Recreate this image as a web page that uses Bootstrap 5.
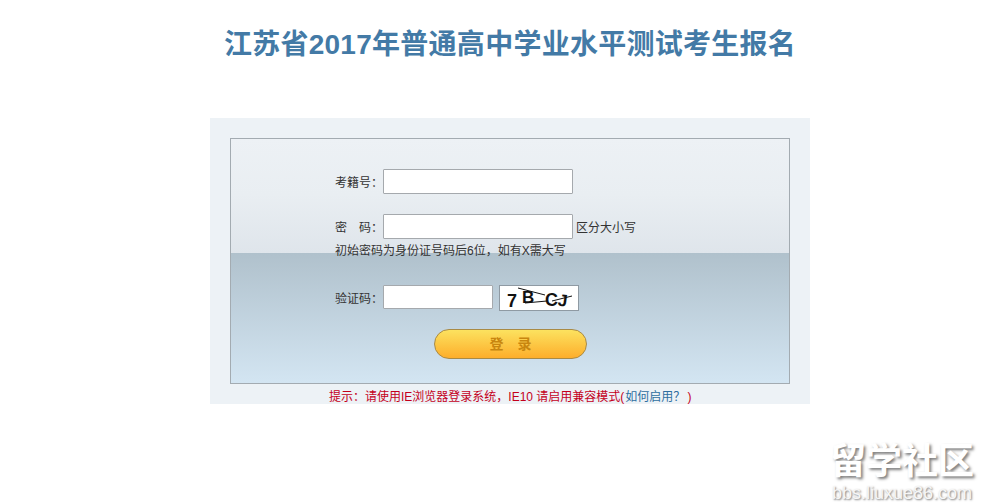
<!DOCTYPE html>
<html lang="zh-CN">
<head>
    <meta charset="UTF-8">
    <meta name="viewport" content="width=device-width, initial-scale=1.0">
    <title>江苏省2017年普通高中学业水平测试考生报名</title>
    <link href="https://cdn.jsdelivr.net/npm/bootstrap@5.3.0/dist/css/bootstrap.min.css" rel="stylesheet">
    <style>
        body {
            font-family: "Liberation Sans", "Noto Sans CJK SC", sans-serif;
            font-size: 12px;
            color: #333;
            background: #fff;
            overflow: hidden;
        }
        .page-wrap {
            position: relative;
            width: 986px;
            height: 504px;
        }
        .page-title {
            font-family: "Liberation Sans", "Noto Sans CJK SC", sans-serif;
            font-size: 28px;
            font-weight: 700;
            line-height: 40px;
            color: #437aa6;
            text-align: center;
            margin: 0;
            padding: 25px 0 53px 34px;
            letter-spacing: 0.27px;
        }
        .login-outer {
            width: 600px;
            height: 286px;
            margin-left: 210px;
            padding: 20px 20px 0;
            background: #edf2f6;
        }
        .login-box {
            height: 246px;
            padding: 30px 0 0 104px;
            border: 1px solid #a3abb1;
            background: linear-gradient(to bottom, #edf1f5 0, #e9eef2 55px, #dfe5eb 114px, #b0c1cc 114px, #d3e5f2 100%);
        }
        .field-row {
            height: 25px;
            line-height: 28px;
        }
        .field-row.next-field {
            margin-top: 20px;
        }
        .field-row.captcha-row {
            margin-top: 26px;
        }
        .field-label {
            width: 48px;
            flex: none;
            white-space: nowrap;
        }
        .field-input {
            width: 190px;
            height: 25px;
            padding: 0 4px;
            font-size: 12px;
            border: 1px solid #a5a9ad;
            border-radius: 1px;
            background: #fff;
        }
        .field-input.short {
            width: 110px;
            height: 24px;
        }
        .field-note {
            margin-left: 3px;
        }
        .hint-line {
            height: 16px;
            line-height: 16px;
            margin-top: 4px;
            white-space: nowrap;
        }
        .captcha-pic {
            display: block;
            flex: none;
            width: 80px;
            height: 26px;
            margin-left: 6px;
            background: #fff;
            border: 1px solid #8f9aa3;
        }
        .captcha-pic text {
            font-family: "Liberation Sans", sans-serif;
            font-weight: 700;
            fill: #111;
        }
        .login-btn {
            display: block;
            width: 153px;
            height: 30px;
            margin: 19px 0 0 99px;
            padding: 0;
            font-size: 14px;
            line-height: 28px;
            font-weight: 700;
            color: #c8860f;
            border: 1px solid #a98a45;
            border-radius: 15px;
            background: linear-gradient(to bottom, #fce25f, #fdae2b);
        }
        .login-btn:hover {
            color: #c8860f;
            border-color: #a98a45;
            background: linear-gradient(to bottom, #fce25f, #fdae2b);
        }
        .tip-line {
            margin-left: 99px;
            height: 20px;
            line-height: 26px;
            color: #c4001c;
            white-space: nowrap;
        }
        .tip-line a {
            margin: 0 2px 0 1px;
            color: #2f6f9f;
            text-decoration: none;
        }
        .site-stamp {
            position: absolute;
            left: 823px;
            top: 442px;
            width: 158px;
            text-align: center;
            color: #fff;
            text-shadow: 2px 2px 3px #7d7d7d;
        }
        .stamp-name {
            font-size: 36px;
            font-weight: 700;
            line-height: 40px;
            white-space: nowrap;
        }
        .stamp-url {
            font-size: 18px;
            line-height: 22px;
            color: #f6f6f6;
            text-shadow: 1px 1px 2px #777;
            white-space: nowrap;
        }
    </style>
</head>
<body>
    <div class="page-wrap">
        <h1 class="page-title">江苏省2017年普通高中学业水平测试考生报名</h1>

        <div class="login-outer">
            <form class="login-box" onsubmit="return false">
                <div class="d-flex field-row">
                    <label class="field-label" for="examNo">考籍号：</label>
                    <input id="examNo" class="field-input" type="text">
                </div>
                <div class="d-flex field-row next-field">
                    <label class="field-label" for="examPwd">密　码：</label>
                    <input id="examPwd" class="field-input" type="password">
                    <span class="field-note">区分大小写</span>
                </div>
                <div class="hint-line">初始密码为身份证号码后6位，如有X需大写</div>
                <div class="d-flex field-row captcha-row">
                    <label class="field-label" for="examCode">验证码：</label>
                    <input id="examCode" class="field-input short" type="text">
                    <svg class="captcha-pic" viewBox="0 0 78 24" aria-label="验证码">
                        <text x="7" y="21" font-size="18">7</text>
                        <text x="22" y="17" font-size="17">B</text>
                        <text x="45" y="20" font-size="18">C</text>
                        <text x="58" y="20" font-size="17" transform="rotate(8 62 14)">J</text>
                        <path d="M18 2 L45 9 M25 17 L47 15 M52 15 L72 10" stroke="#111" stroke-width="1" fill="none"/>
                    </svg>
                </div>
                <button type="submit" class="btn login-btn">登　录</button>
            </form>
            <div class="tip-line">提示：请使用IE浏览器登录系统，IE10 请启用兼容模式(<a href="#">如何启用？</a>)</div>
        </div>

        <div class="site-stamp">
            <div class="stamp-name">留学社区</div>
            <div class="stamp-url">bbs.liuxue86.com</div>
        </div>
    </div>

    <script src="https://cdn.jsdelivr.net/npm/bootstrap@5.3.0/dist/js/bootstrap.bundle.min.js"></script>
</body>
</html>
